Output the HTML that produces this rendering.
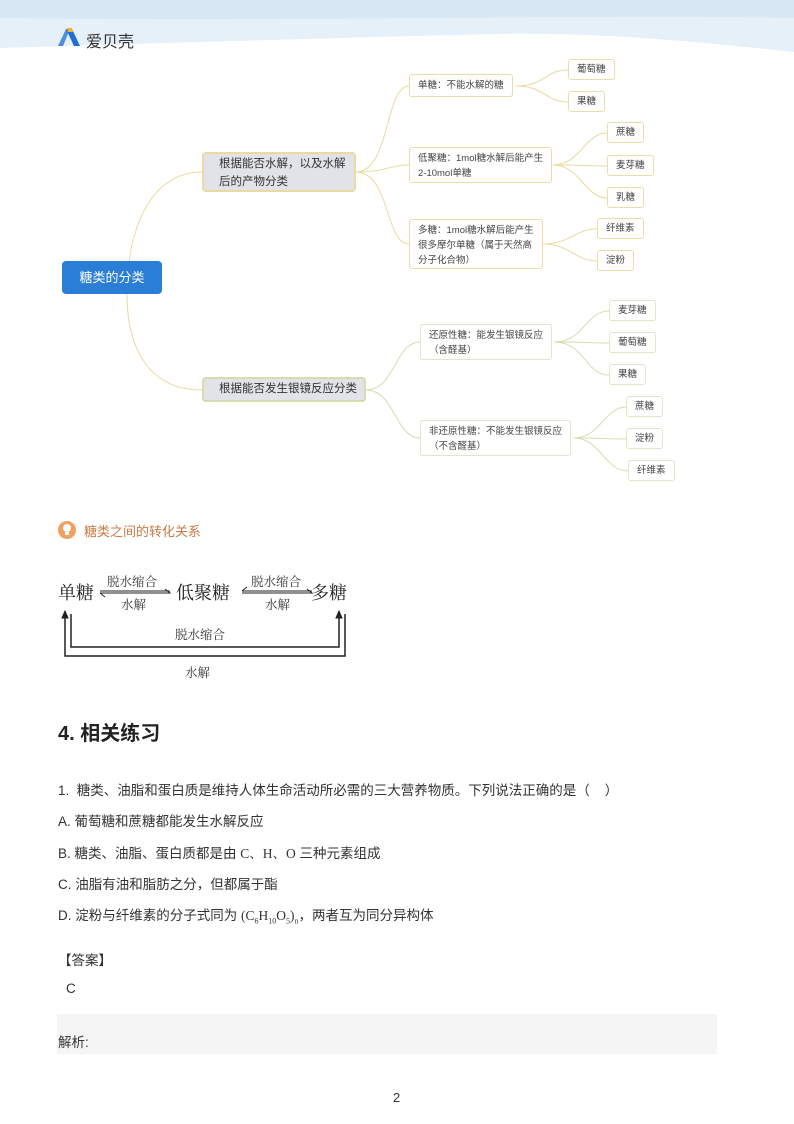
<!DOCTYPE html>
<html><head><meta charset="utf-8"><style>
*{margin:0;padding:0;box-sizing:border-box}
body{width:794px;height:1124px;position:relative;background:#fff;font-family:"Liberation Sans","Noto Sans CJK SC",sans-serif;color:#333;overflow:hidden}
.a{position:absolute;white-space:nowrap}
.n{position:absolute;background:#fff;border:1px solid #ecdcaa;border-radius:3px;font-size:9.5px;color:#444;line-height:15px;padding:3px 8px;white-space:nowrap}
.q{position:absolute;left:58px;font-size:13.5px;color:#333;white-space:nowrap}
.s{font-family:"Liberation Serif","Noto Serif CJK SC",serif}
</style></head><body>
<svg class="a" style="left:0;top:0" width="794" height="60">
<path d="M0 0H794V52C700 42 600 32 500 34C400 36 200 42 0 48Z" fill="#e6f0f9"/>
<path d="M0 0H794V18C600 14 300 22 0 18Z" fill="#d8e8f4"/>
</svg>
<svg class="a" style="left:57px;top:27px" width="24" height="20"><path d="M1 19L9 2L13 2L6 19Z" fill="#4c8fe0"/><path d="M9 2L15 2L23 19L17 19Z" fill="#1f6fd6"/><path d="M10 1L15 1L16 5L11 5Z" fill="#f2b233"/></svg>
<div class="a" style="left:86px;top:28px;font-size:16px;color:#333">爱贝壳</div>

<svg class="a" style="left:0;top:0" width="794" height="500" fill="none" stroke-width="1">
<g stroke="#ecd9a0">
<path d="M127 294C127 230 150 172 202 172"/>
<path d="M127 294C127 350 150 390 202 390"/>
<path d="M356 172C390 172 385 86 409 86"/>
<path d="M356 172C385 172 390 165 409 165"/>
<path d="M356 172C390 172 385 244 409 244"/>
<path d="M516 86C545 86 545 70 568 70"/>
<path d="M516 86C545 86 545 102 568 102"/>
<path d="M553 165C580 165 585 133 607 133"/>
<path d="M553 165C585 165 590 166 607 166"/>
<path d="M553 165C580 165 585 198 607 198"/>
<path d="M543 244C570 244 575 229 597 229"/>
<path d="M543 244C570 244 575 261 597 261"/>
</g>
<g stroke="#d8dcb0">
<path d="M366 390C395 390 395 342 420 342"/>
<path d="M366 390C395 390 395 438 420 438"/>
<path d="M554 342C585 342 585 311 609 311"/>
<path d="M554 342C585 342 590 343 609 343"/>
<path d="M554 342C585 342 585 375 609 375"/>
<path d="M574 438C600 438 605 407 626 407"/>
<path d="M574 438C600 438 605 439 626 439"/>
<path d="M574 438C600 438 605 471 628 471"/>
</g>
</svg>
<div class="a" style="left:62px;top:261px;width:100px;height:33px;background:#2a7ed6;border-radius:4px;color:#fff;font-size:13px;line-height:33px;text-align:center">糖类的分类</div>
<div class="a" style="left:202px;top:152px;width:154px;height:40px;background:#e1e3e8;border:2px solid #ecd9a0;border-radius:4px;font-size:11.5px;line-height:18px;padding:1px 0 0 15px;color:#333;white-space:normal">根据能否水解，以及水解后的产物分类</div>
<div class="a" style="left:202px;top:377px;width:164px;height:25px;background:#e1e3e8;border:2px solid #d5dcae;border-radius:4px;font-size:11.5px;line-height:21px;padding-left:15px;color:#333">根据能否发生银镜反应分类</div>
<div class="n" style="left:409px;top:74px;height:23px">单糖：不能水解的糖</div>
<div class="n" style="left:409px;top:147px;height:36px">低聚糖：1mol糖水解后能产生<br>2-10mol单糖</div>
<div class="n" style="left:409px;top:219px;height:50px">多糖：1mol糖水解后能产生<br>很多摩尔单糖（属于天然高<br>分子化合物）</div>
<div class="n" style="left:568px;top:59px;height:21px;line-height:13px">葡萄糖</div>
<div class="n" style="left:568px;top:91px;height:21px;line-height:13px">果糖</div>
<div class="n" style="left:607px;top:122px;height:21px;line-height:13px">蔗糖</div>
<div class="n" style="left:607px;top:155px;height:21px;line-height:13px">麦芽糖</div>
<div class="n" style="left:607px;top:187px;height:21px;line-height:13px">乳糖</div>
<div class="n" style="left:597px;top:218px;height:21px;line-height:13px">纤维素</div>
<div class="n" style="left:597px;top:250px;height:21px;line-height:13px">淀粉</div>
<div class="n" style="left:420px;top:324px;height:36px;border-color:#e2e4cc">还原性糖：能发生银镜反应<br>（含醛基）</div>
<div class="n" style="left:420px;top:420px;height:36px;border-color:#e2e4cc">非还原性糖：不能发生银镜反应<br>（不含醛基）</div>
<div class="n" style="left:609px;top:300px;height:21px;line-height:13px;border-color:#e2e4cc">麦芽糖</div>
<div class="n" style="left:609px;top:332px;height:21px;line-height:13px;border-color:#e2e4cc">葡萄糖</div>
<div class="n" style="left:609px;top:364px;height:21px;line-height:13px;border-color:#e2e4cc">果糖</div>
<div class="n" style="left:626px;top:396px;height:21px;line-height:13px;border-color:#e2e4cc">蔗糖</div>
<div class="n" style="left:626px;top:428px;height:21px;line-height:13px;border-color:#e2e4cc">淀粉</div>
<div class="n" style="left:628px;top:460px;height:21px;line-height:13px;border-color:#e2e4cc">纤维素</div>

<div class="a" style="left:58px;top:521px;width:18px;height:18px;border-radius:50%;background:#f0a060"></div>
<div class="a" style="left:63px;top:524px;width:8px;height:8px;border-radius:50%;background:#fff"></div>
<div class="a" style="left:65px;top:532px;width:4px;height:3px;background:#fff"></div>
<div class="a" style="left:84px;top:521px;font-size:13px;color:#c97a45">糖类之间的转化关系</div>

<div class="a s" style="left:58px;top:579px;font-size:18px;color:#222">单糖</div>
<div class="a s" style="left:176px;top:579px;font-size:18px;color:#222">低聚糖</div>
<div class="a s" style="left:311px;top:579px;font-size:18px;color:#222">多糖</div>
<div class="a s" style="left:107px;top:572px;font-size:12.5px">脱水缩合</div>
<div class="a s" style="left:121px;top:595px;font-size:12.5px">水解</div>
<div class="a s" style="left:251px;top:572px;font-size:12.5px">脱水缩合</div>
<div class="a s" style="left:265px;top:595px;font-size:12.5px">水解</div>
<div class="a s" style="left:175px;top:625px;font-size:12.5px">脱水缩合</div>
<div class="a s" style="left:185px;top:663px;font-size:12.5px">水解</div>
<svg class="a" style="left:0;top:570px" width="400" height="100" fill="none" stroke="#222">
<path d="M100 21H170M100 23H170L165 19" stroke-width="1"/><path d="M100 23L105 27"/>
<path d="M242 21H312M242 23H312L307 19"/><path d="M242 21L247 17"/>
<path d="M65 44V86H345V44" stroke-width="1.5"/>
<path d="M71 44V77H339V44" stroke-width="1.5"/>
<path d="M62 48L65 41L68 48Z" fill="#222"/><path d="M336 48L339 41L342 48Z" fill="#222"/>
</svg>

<div class="a" style="left:58px;top:717px;font-size:20px;font-weight:bold;color:#222">4. 相关练习</div>
<div class="q" style="top:779px">1.&nbsp; 糖类、油脂和蛋白质是维持人体生命活动所必需的三大营养物质。下列说法正确的是（&nbsp;&nbsp;&nbsp;&nbsp;）</div>
<div class="q" style="top:810px">A. 葡萄糖和蔗糖都能发生水解反应</div>
<div class="q" style="top:842px">B. 糖类、油脂、蛋白质都是由 <span class="s">C、H、O</span> 三种元素组成</div>
<div class="q" style="top:873px">C. 油脂有油和脂肪之分，但都属于酯</div>
<div class="q" style="top:904px">D. 淀粉与纤维素的分子式同为 <span class="s">(C<sub style="font-size:8px">6</sub>H<sub style="font-size:8px">10</sub>O<sub style="font-size:8px">5</sub>)<sub style="font-size:8px">n</sub></span>，两者互为同分异构体</div>
<div class="q" style="top:949px">【答案】</div>
<div class="q" style="left:66px;top:981px">C</div>
<div class="a" style="left:57px;top:1014px;width:660px;height:40px;background:#f5f5f5"></div>
<div class="q" style="top:1031px">解析:</div>
<div class="a" style="left:393px;top:1090px;font-size:13px">2</div>
</body></html>
